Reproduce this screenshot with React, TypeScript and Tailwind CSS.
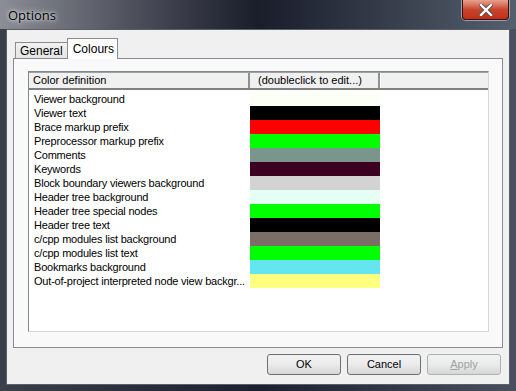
const rows: { label: string; color: string }[] = [
  { label: 'Viewer background', color: '#fbfff5' },
  { label: 'Viewer text', color: '#000000' },
  { label: 'Brace markup prefix', color: '#ff0000' },
  { label: 'Preprocessor markup prefix', color: '#00ff00' },
  { label: 'Comments', color: '#7a968c' },
  { label: 'Keywords', color: '#3c0020' },
  { label: 'Block boundary viewers background', color: '#d3d3d3' },
  { label: 'Header tree background', color: '#e5fff5' },
  { label: 'Header tree special nodes', color: '#00ff00' },
  { label: 'Header tree text', color: '#000000' },
  { label: 'c/cpp modules list background', color: '#7a6e66' },
  { label: 'c/cpp modules list text', color: '#00ff00' },
  { label: 'Bookmarks background', color: '#64e6f0' },
  { label: 'Out-of-project interpreted node view backgr...', color: '#ffff80' }
]

function DialogButton({ label, disabled }: { label: string; disabled?: boolean }) {
  return (
    <button
      className={
        'w-[74px] h-[21px] rounded-[3px] border bg-gradient-to-b from-[#f2f2f2] via-[#ebebeb] to-[#d6d6d6] text-[11px] leading-none ' +
        (disabled ? 'border-[#adb2b5] text-[#a0a0a0]' : 'border-[#707070] text-black')
      }
    >
      {label === 'Apply' ? (
        <span>
          <span className="underline">A</span>pply
        </span>
      ) : (
        label
      )}
    </button>
  )
}

export default function App() {
  return (
    <div
      className="w-[516px] h-[391px] flex flex-col bg-gradient-to-r from-[#3b3f4a] via-[#1c2030] to-[#4a5060] overflow-hidden"
      style={{ fontFamily: '"Liberation Sans", Arial, sans-serif' }}
    >
      {/* title bar */}
      <div className="h-[29px] flex items-start justify-between bg-gradient-to-r from-[#8c8e96] via-[#1a1d2a] via-50% to-[#55606e]">
        <span
          className="ml-[8px] mt-[6px] text-[13px] text-black"
          style={{ fontFamily: '"Open Sans", "Noto Sans", sans-serif', textShadow: '0 0 6px #e0e4ea, 0 0 3px #e8ecf0' }}
        >
          Options
        </span>
        <div className="mr-[7px] w-[47px] h-[20px] rounded-b-[4px] border border-t-0 border-[#3a1010] bg-gradient-to-b from-[#e8a090] via-[#c8452c] to-[#c0301a] flex items-center justify-center shadow-[0_0_0_1px_#9aa0aa]">
          <svg width="14" height="12" viewBox="0 0 14 12">
            <path d="M2 1 L12 11 M12 1 L2 11" stroke="#4a4a4a" strokeWidth="4" strokeLinecap="square" />
            <path d="M2 1 L12 11 M12 1 L2 11" stroke="#ffffff" strokeWidth="2.4" strokeLinecap="square" />
          </svg>
        </div>
      </div>

      {/* client area */}
      <div className="flex-1 mx-[6px] mb-[6px] border border-[#5a5e66] bg-[#f0f0f0] flex flex-col">
        <div className="flex flex-col mt-[7px] mx-[6px]">
          {/* tabs */}
          <div className="flex items-end h-[21px] pl-[2px] text-[12px]">
            <div className="h-[16px] px-[4px] border border-b-0 border-[#898c95] bg-gradient-to-b from-[#f2f2f2] to-[#e4e4e4] flex items-center">
              General
            </div>
            <div className="h-[21px] px-[5px] border border-b-0 border-[#898c95] bg-white flex items-center -mb-px relative z-10 w-[51px] -ml-px">
              Colours
            </div>
          </div>
          {/* panel */}
          <div className="h-[290px] border border-[#898c95] bg-[#f9f9f9] pt-[12px] pl-[14px] pr-[13px] pb-[15px] flex">
            <div className="flex-1 border border-[#828790] border-r-[#d8d8d8] border-b-[#d8d8d8] bg-white flex flex-col text-[11px] text-black">
              <div className="h-[18px] flex bg-[#f0f0f0] border-b-2 border-[#808080] border-t border-t-[#a0a0a0]">
                <div className="w-[221px] border-r-2 border-[#909090] pl-[4px] flex items-center">Color definition</div>
                <div className="w-[130px] border-r-2 border-[#909090] pl-[8px] flex items-center">(doubleclick to edit...)</div>
                <div className="flex-1 border-l border-white"></div>
              </div>
              <div className="pt-[2px] flex flex-col">
                {rows.map((r) => (
                  <div key={r.label} className="h-[14px] flex items-center">
                    <div className="w-[221px] pl-[5px] whitespace-nowrap leading-[14px] tracking-[-0.2px]">{r.label}</div>
                    <div className="w-[130px] h-[14px]" style={{ backgroundColor: r.color }}></div>
                  </div>
                ))}
              </div>
            </div>
          </div>
        </div>
        {/* buttons */}
        <div className="flex justify-end gap-[6px] mt-[6px] mr-[8px]">
          <DialogButton label="OK" />
          <DialogButton label="Cancel" />
          <DialogButton label="Apply" disabled />
        </div>
      </div>
    </div>
  )
}
